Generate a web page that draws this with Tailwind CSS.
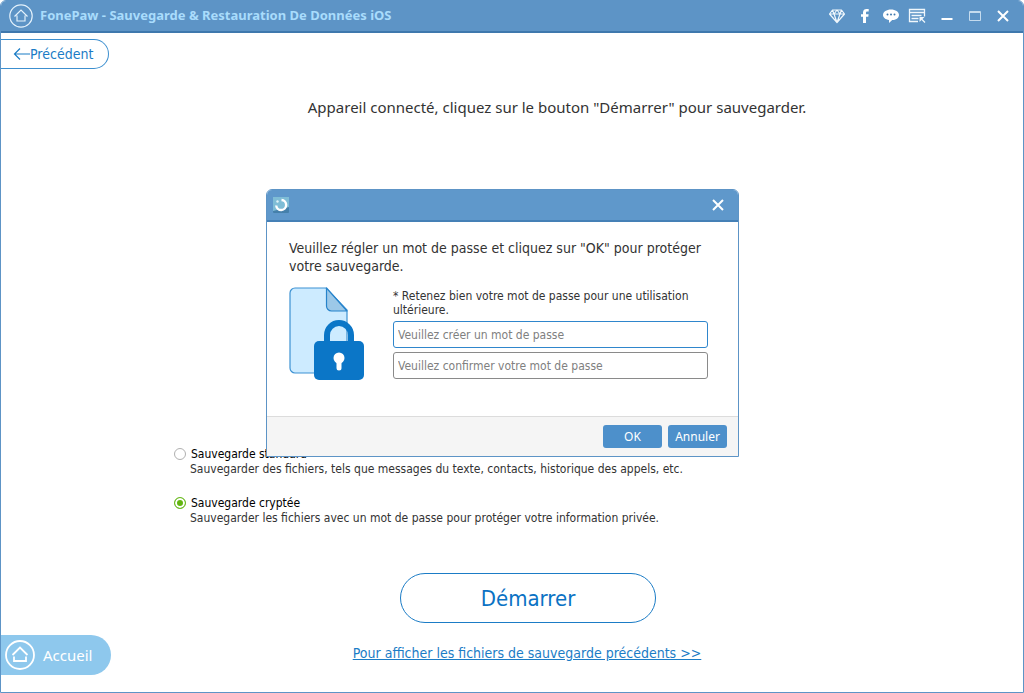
<!DOCTYPE html>
<html lang="fr">
<head>
    <meta charset="UTF-8">
    <meta name="viewport" content="width=device-width, initial-scale=1.0">
    <title>FonePaw - Sauvegarde & Restauration De Données iOS</title>
    <script src="https://cdn.jsdelivr.net/npm/@tailwindcss/browser@4"></script>
</head>
<body class="bg-white">
    <div id="app" class="relative flex flex-col min-h-screen border border-[#5d94c6] rounded-t-md overflow-hidden font-['DejaVu_Sans_Condensed','Noto_Sans',sans-serif] text-[#333]">
        <!-- Title bar -->
        <header class="flex items-center justify-between h-8 pl-2 pr-1.5 bg-[#5d94c6] border-b-2 border-[#3f78ad] text-white">
            <div class="flex items-center gap-[7px]">
                <button type="button" aria-label="Accueil">
                    <svg class="w-6 h-6" viewBox="0 0 24 24" fill="none" stroke="#e3f1fb" stroke-width="1.2">
                        <circle cx="12" cy="12" r="11.2" />
                        <path d="M8 11.500v5.500h8v-5.500M5.500 12.500L12 6l6.500 6.500" />
                    </svg>
                </button>
                <h1 class="text-[13px] font-bold font-['Noto_Sans',sans-serif] text-[#a9dcfc] whitespace-nowrap">FonePaw - Sauvegarde &amp; Restauration De Données iOS</h1>
            </div>
            <div class="flex items-center">
                <button type="button" class="w-6" aria-label="Acheter">
                    <svg class="w-4 h-4" viewBox="0 0 16 16" fill="none" stroke="#f0f7fc" stroke-width="1.2" stroke-linejoin="round">
                        <path d="M3.500 2h9L15.500 6 8 14.500.5 6zM.5 6h15M3.500 2L5 6l3-4 3 4 1.500-4M5 6l3 8.500L11 6" />
                    </svg>
                </button>
                <button type="button" class="w-6 flex justify-center" aria-label="Facebook">
                    <svg class="w-4 h-4" viewBox="0 0 16 16" fill="#fff">
                        <path d="M6 15V8.800H4V6.300h2V4.500C6 2.200 7.500 1.100 9.500 1.100h2.200v2.300h-1.300c-.9 0-1.400.5-1.400 1.200v1.700h2.600l-.3 2.500H9V15z" />
                    </svg>
                </button>
                <button type="button" class="w-7 flex justify-center" aria-label="Commentaires">
                    <svg class="w-4 h-4" viewBox="0 0 16 16" fill="#fff">
                        <path d="M8 1.500c4.400 0 8 2.300 8 5.400s-3.200 5-6.800 5.200L6 15v-3.100C2.500 11.400 0 9.500 0 6.900 0 3.800 3.600 1.500 8 1.500z" />
                        <g fill="#3f78ad"><circle cx="4.500" cy="6.500" r="1" /><circle cx="8" cy="6.500" r="1" /><circle cx="11.500" cy="6.500" r="1" /></g>
                    </svg>
                </button>
                <button type="button" class="w-6 flex justify-center" aria-label="Menu">
                    <svg class="w-[18px] h-4" viewBox="0 0 18 16" fill="none" stroke="#f0f7fc" stroke-width="1.300">
                        <path d="M10 13.500H1.500v-12h15v7M1.500 4.500h15M3.500 7.500h10M3.500 10.500h7" />
                        <path d="M11.500 9h5l-5 5z" fill="#f0f7fc" stroke="none" />
                        <path d="M13.500 11l3.500 3.500" />
                    </svg>
                </button>
                <button type="button" class="w-7 ml-1 flex justify-center" aria-label="Réduire">
                    <svg class="w-4 h-4" viewBox="0 0 16 16" stroke="#fff" stroke-width="2"><path d="M2.500 11h11" /></svg>
                </button>
                <button type="button" class="w-7 flex justify-center" aria-label="Agrandir">
                    <svg class="w-4 h-4" viewBox="0 0 16 16" fill="none" stroke="#c4dbee"><path d="M2.500 3.500h11v9h-11zM2.500 4.500h11" /></svg>
                </button>
                <button type="button" class="w-7 flex justify-center" aria-label="Fermer">
                    <svg class="w-4 h-4" viewBox="0 0 16 16" stroke="#fff" stroke-width="2"><path d="M3 3l10 10M13 3L3 13" /></svg>
                </button>
            </div>
        </header>

        <main class="flex-1 flex flex-col">
            <button type="button" class="self-start flex items-center mt-1.5 h-[30px] pl-3 pr-[15px] border border-l-0 border-[#3c8fcf] rounded-r-full text-sm text-[#1b7cc6]">
                <svg class="w-[17px] h-4" viewBox="0 0 17 16" fill="none" stroke="currentColor" stroke-width="1.200"><path d="M17 8H1.500M7 2.500L1.500 8 7 13.500" /></svg>
                Précédent
            </button>

            <p class="mt-[26px] pl-[90px] text-center text-[15px] leading-6 font-['Noto_Sans',sans-serif]">Appareil connecté, cliquez sur le bouton "Démarrer" pour sauvegarder.</p>

            <!-- Backup type -->
            <div class="mt-auto pl-[173px] text-xs text-[#333]">
                <div class="mb-[19px]">
                    <label class="flex items-center gap-[5px] text-xs leading-4 text-black">
                        <input type="radio" name="backup" class="appearance-none w-3 h-3 rounded-full border border-[#b0b0b0] bg-white checked:border-[#6cbb23] checked:bg-[#62b510] checked:shadow-[inset_0_0_0_2px_#fff]">
                        Sauvegarde standard
                    </label>
                    <p class="pl-4 leading-[14px]">Sauvegarder des fichiers, tels que messages du texte, contacts, historique des appels, etc.</p>
                </div>
                <div>
                    <label class="flex items-center gap-[5px] text-xs leading-4 text-black">
                        <input type="radio" name="backup" checked class="appearance-none w-3 h-3 rounded-full border border-[#b0b0b0] bg-white checked:border-[#6cbb23] checked:bg-[#62b510] checked:shadow-[inset_0_0_0_2px_#fff]">
                        Sauvegarde cryptée
                    </label>
                    <p class="pl-4 leading-[14px]">Sauvegarder les fichiers avec un mot de passe pour protéger votre information privée.</p>
                </div>
            </div>

            <div class="mt-12 pl-8 flex justify-center">
                <button type="button" class="w-64 h-[50px] border border-[#1b7cc6] rounded-full text-[22px] text-[#0b72c4]">Démarrer</button>
            </div>

            <div class="mt-3 mb-[17px] grid grid-cols-[110px_1fr_80px] items-center">
                <button type="button" class="flex items-center gap-2 h-10 pl-1 bg-[#8ec8ed] rounded-r-full text-[15px] font-['Noto_Sans',sans-serif] text-white">
                    <svg class="w-[30px] h-[30px]" viewBox="0 0 30 30" fill="none" stroke="#fff" stroke-width="1.800">
                        <circle cx="15" cy="15" r="14" />
                        <path d="M7.500 15L15 7.500l7.500 7.500M9 16.500v4.500h12v-4.500" />
                    </svg>
                    Accueil
                </button>
                <a href="#" class="justify-self-center pb-1 text-sm text-[#1b7cc6] underline">Pour afficher les fichiers de sauvegarde précédents &gt;&gt;</a>
            </div>
        </main>

        <!-- Password dialog -->
        <div role="dialog" aria-modal="true" aria-label="Mot de passe" class="absolute top-[188px] left-[265px] w-[473px] rounded-t-md overflow-hidden bg-white border border-[#5d94c6]">
            <div class="flex items-center justify-between h-8 pl-1.5 pr-3 bg-[#5f98cb] border-b-2 border-[#4580b6]">
                <svg class="w-4 h-4" viewBox="0 0 16 16" fill="none">
                    <rect width="16" height="16" rx="1" fill="#4580ab" />
                    <path d="M0 0h16v10L0 14z" fill="#7fbdd6" />
                    <path d="M8.500 3a5 5 0 1 1-5.300 5.500" stroke="#fff" stroke-width="2.400" />
                    <circle cx="4.500" cy="4.500" r="1.200" fill="#dff2f8" />
                </svg>
                <button type="button" aria-label="Fermer">
                    <svg class="w-4 h-4" viewBox="0 0 16 16" stroke="#fff" stroke-width="2"><path d="M3 3l10 10M13 3L3 13" /></svg>
                </button>
            </div>
            <form id="password-form">
                <div class="h-[194px] pt-[17px] pl-[22px] pr-[30px]">
                    <p class="text-sm leading-[18px]">Veuillez régler un mot de passe et cliquez sur "OK" pour protéger votre sauvegarde.</p>
                    <div class="flex gap-7 mt-3">
                        <svg class="w-[76px] h-[94px] shrink-0" viewBox="0 0 76 94">
                            <path d="M6 1h31l21 22v63H6a5 5 0 0 1-5-5V6a5 5 0 0 1 5-5z" fill="#cdebff" stroke="#3d92d3" stroke-width="1.200" />
                            <path d="M37.500 1v18a5 5 0 0 0 5 5H58z" fill="#9cc8e8" stroke="#2683cb" stroke-width="1.200" stroke-linejoin="round" />
                            <path d="M38 56V48a12 12 0 0 1 24 0v8" fill="none" stroke="#0b76c7" stroke-width="6" />
                            <rect x="25" y="54" width="50" height="39" rx="5" fill="#0b76c7" />
                            <circle cx="50" cy="71" r="5.500" fill="#fff" />
                            <path d="M50 73v8" stroke="#fff" stroke-width="5" stroke-linecap="round" />
                        </svg>
                        <div class="flex-1 pt-0.5">
                            <p class="text-xs leading-[14px] mb-1">* Retenez bien votre mot de passe pour une utilisation ultérieure.</p>
                            <input type="password" aria-label="Créer un mot de passe" placeholder="Veuillez créer un mot de passe" class="block w-full h-[27px] px-1 mb-1 border border-[#2f86cc] rounded-[3px] text-xs placeholder:text-[#808080] focus:outline-none">
                            <input type="password" aria-label="Confirmer le mot de passe" placeholder="Veuillez confirmer votre mot de passe" class="block w-full h-[27px] px-1 border border-[#8a8a8a] rounded-[3px] text-xs placeholder:text-[#808080] focus:outline-none">
                        </div>
                    </div>
                </div>
                <div class="flex items-center justify-end gap-1.5 h-10 px-[11px] bg-[#f5f5f5] border-t border-[#dcdcdc] text-xs font-['Noto_Sans',sans-serif] text-white">
                    <button type="submit" class="w-[59px] h-[23px] bg-[#4d90cb] rounded-[3px]">OK</button>
                    <button type="button" class="w-[59px] h-[23px] bg-[#4d90cb] rounded-[3px]">Annuler</button>
                </div>
            </form>
        </div>
    </div>

    <script>
        var passwordForm = document.getElementById('password-form');

        passwordForm.addEventListener('submit', function(e) {
            e.preventDefault();
        });
    </script>
</body>
</html>
